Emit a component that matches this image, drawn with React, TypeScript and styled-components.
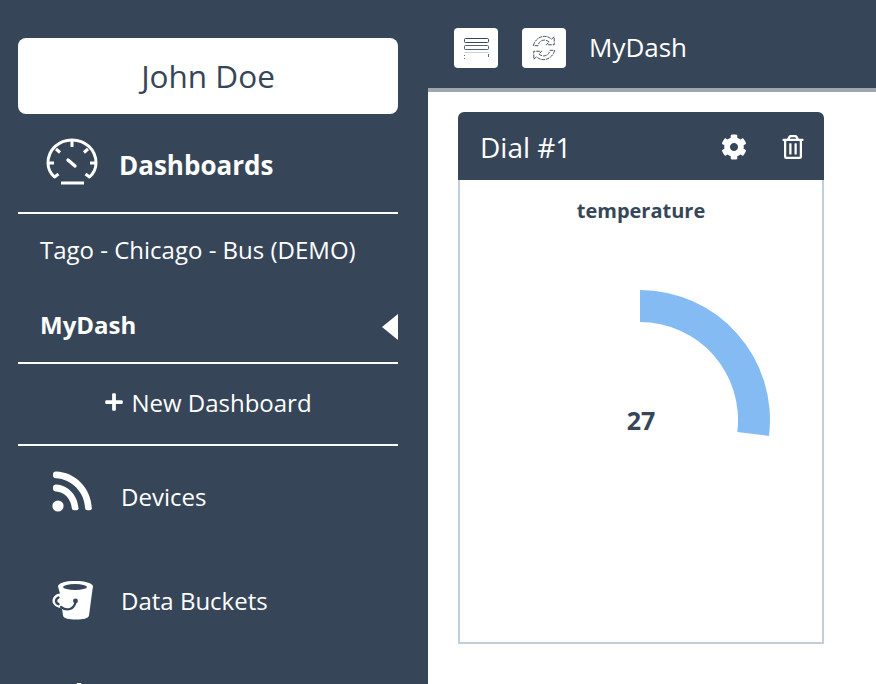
import styled, { createGlobalStyle } from 'styled-components';
import { FaCog, FaPlus, FaRegTrashAlt } from 'react-icons/fa';

const GlobalStyle = createGlobalStyle`
    html, body {
        margin: 0;
        padding: 0;
        height: 100%;
        overflow: hidden;
        background: #fff;
        font-family: 'Open Sans', 'Liberation Sans', sans-serif;
    }
`;

const GaugeIcon = () => (
    <svg width='54' height='50' viewBox='0 0 54 50' fill='none' stroke='#fff' strokeWidth='3' strokeLinecap='round'>
        <path d='M8.5 39C4 35 2 30 2 25 C2 11.5 13 2 26 2 C39 2 50 11.5 50 25 C50 30 48 35 43.5 39' />
        <path d='M26 3v6M10 11l4 3.5M42 11l-4 3.5M2.5 25h5.5M49.5 25h-5.5M8.5 39l4-3M43.5 39l-4-3' strokeLinecap='butt' />
        <path d='M22 22l7 6' strokeWidth='3.4' />
        <path d='M15 45h23' strokeLinecap='butt' />
    </svg>
);

const RssIcon = () => (
    <svg width='42' height='42' viewBox='1 0 42 42' fill='#fff'>
        <circle cx='7' cy='35' r='5.6' />
        <path d='M2 16.500a3 3 0 0 1 3-3C16.500 14 26.500 23.500 27.500 37a2 2 0 0 1-2 2.200h-2.200a2.400 2.400 0 0 1-2.500-2.300C20 28 13.500 21 5 20.500a3 3 0 0 1-3-3z' />
        <path d='M2 3.500a3 3 0 0 1 3-3C24 1 40 17 40.800 37a2 2 0 0 1-2 2.200h-2.400a2.300 2.300 0 0 1-2.300-2.300C33.300 21 20.500 8 5 7.300a3 3 0 0 1-3-3z' />
    </svg>
);

const BucketIcon = () => (
    <svg width='42' height='40' viewBox='0 0 42 40' fill='none'>
        <path
            fill='#fff'
            d='M23 1c9.500 0 18 2 18 5.500 0 1-.3 1.800-.5 2.700L37 35.500c-.5 3-6 4-13 4s-12.500-1-13-4l-1-7c-5-1-9.500-3.500-9.500-7.500 0-4 3-7 7.500-7.500L6 6.500C6 3 13.500 1 23 1z'
        />
        <ellipse cx='23' cy='7' rx='12' ry='3' fill='#364658' />
        <path d='M6.500 17.500c-1.500.8-2.500 2-2.500 3.500 0 1.500 1 2.500 2.500 3.200' stroke='#364658' strokeWidth='2.400' strokeLinecap='round' />
        <path d='M9 27c6 4.500 13 2.500 14.500-5' stroke='#364658' strokeWidth='2.200' strokeLinecap='round' />
        <circle cx='23.500' cy='21' r='2.400' fill='#364658' />
    </svg>
);

const CutOffIcon = () => (
    <svg width='42' height='42' viewBox='0 0 42 42' fill='#fff'>
        <path d='M25 0h4l5 14h-14z' />
    </svg>
);

const BarsIcon = () => (
    <svg width='27' height='24' viewBox='0 0 27 24' fill='none' stroke='#364658' strokeWidth='1'>
        <rect x='1.500' y='2.500' width='24' height='4' rx='1' />
        <rect x='1.500' y='9.500' width='24' height='4' rx='1' strokeOpacity='.85' />
        <path d='M1.500 16.500h24' strokeOpacity='.25' />
        <path d='M1.500 19v1M1.500 22v1M25.500 18v3' strokeOpacity='.8' />
    </svg>
);

const RefreshIcon = () => (
    <svg width='26' height='26' viewBox='0 0 28 28' fill='none' stroke='#364658' strokeWidth='1' strokeDasharray='4 1'>
        <path d='M2.500 11.500C4 5.500 9 1.500 14.500 1.500c3 0 5.500 1 7.500 3l3-2.500v8.500h-8.500l3-3c-1.500-1.300-3.300-2-5-2-3.500 0-6 2-7 6z' />
        <path d='M25.500 16.500C24 22.500 19 26.500 13.500 26.500c-3 0-5.500-1-7.500-3L3 26v-8.500h8.500l-3 3c1.500 1.300 3.300 2 5 2 3.500 0 6-2 7-6z' />
    </svg>
);

const App = () => {
    return (
        <Page>
            <GlobalStyle />
            <Sidebar>
                <UserBox>John Doe</UserBox>
                <SectionHead>
                    <IconSlot>
                        <GaugeIcon />
                    </IconSlot>
                    <SectionName>Dashboards</SectionName>
                </SectionHead>
                <DashLink>Tago - Chicago - Bus (DEMO)</DashLink>
                <DashLink $active>MyDash</DashLink>
                <NewDash>
                    <FaPlus size={20} />
                    New Dashboard
                </NewDash>
                <NavItem>
                    <NavIcon $lift={8}>
                        <RssIcon />
                    </NavIcon>
                    Devices
                </NavItem>
                <NavItem>
                    <NavIcon>
                        <BucketIcon />
                    </NavIcon>
                    Data Buckets
                </NavItem>
                <NavItem>
                    <NavIcon>
                        <CutOffIcon />
                    </NavIcon>
                </NavItem>
            </Sidebar>
            <Main>
                <TopBar>
                    <SquareButton>
                        <BarsIcon />
                    </SquareButton>
                    <SquareButton>
                        <RefreshIcon />
                    </SquareButton>
                    <PageTitle>MyDash</PageTitle>
                </TopBar>
                <Content>
                    <Card>
                        <CardHead>
                            <CardTitle>Dial #1</CardTitle>
                            <CardTools>
                                <FaCog size={26} />
                                <FaRegTrashAlt size={24} />
                            </CardTools>
                        </CardHead>
                        <CardBody>
                            <DialLabel>temperature</DialLabel>
                            <Dial>
                                <svg width='362' height='160' viewBox='0 0 362 160'>
                                    <path
                                        fill='#85bbf3'
                                        d='M180 0A130 130 0 0 1 309 146L277.300 142A98 98 0 0 0 180 32z'
                                    />
                                </svg>
                                <DialValue>27</DialValue>
                            </Dial>
                        </CardBody>
                    </Card>
                </Content>
            </Main>
        </Page>
    );
};

export default App;

const Page = styled.div`
    display: flex;
    height: 684px;
    width: 876px;
    overflow: hidden;
`;

const Sidebar = styled.aside`
    width: 428px;
    flex: none;
    box-sizing: border-box;
    height: 684px;
    overflow: hidden;
    padding: 38px 30px 0 18px;
    background: #364658;
    color: #fff;
`;

const UserBox = styled.div`
    height: 76px;
    border-radius: 8px;
    background: #fff;
    color: #364658;
    font-size: 31.5px;
    line-height: 76px;
    text-align: center;
`;

const SectionHead = styled.div`
    display: flex;
    align-items: center;
    height: 98px;
    padding-left: 28px;
    border-bottom: 2px solid #fff;
`;

const IconSlot = styled.div`
    display: flex;
    width: 73px;
    flex: none;
`;

const SectionName = styled.span`
    margin-top: 4px;
    font-size: 26px;
    font-weight: 700;
`;

const DashLink = styled.div<{ $active?: boolean }>`
    position: relative;
    height: ${p => (p.$active ? '73px' : '75px')};
    padding-left: 22px;
    font-size: 24px;
    font-weight: ${p => (p.$active ? 700 : 400)};
    line-height: 72px;
    ${p =>
        p.$active &&
        `
        border-bottom: 2px solid #fff;
        &::after {
            content: '';
            position: absolute;
            right: 0;
            top: 25px;
            border-style: solid;
            border-width: 13px 16px 13px 0;
            border-color: transparent #fff transparent transparent;
        }
    `}
`;

const NewDash = styled.div`
    display: flex;
    align-items: center;
    justify-content: center;
    gap: 7px;
    height: 82px;
    box-sizing: border-box;
    padding-bottom: 4px;
    border-bottom: 2px solid #fff;
    font-size: 24px;
`;

const NavItem = styled.div`
    display: flex;
    align-items: center;
    height: 104px;
    font-size: 24px;

    ${NewDash} + & {
        height: 100px;
        margin-bottom: 2px;
    }
`;

const NavIcon = styled.div<{ $lift?: number }>`
    display: flex;
    width: 103px;
    padding-left: 34px;
    box-sizing: border-box;
    flex: none;
    margin-bottom: ${p => p.$lift ?? 0}px;
`;

const Main = styled.main`
    flex: 1;
    min-width: 0;
`;

const TopBar = styled.header`
    display: flex;
    align-items: center;
    gap: 24px;
    height: 80px;
    padding: 8px 0 0 26px;
    background: #364658;
    border-bottom: 4px solid #9fa6ae;
`;

const SquareButton = styled.div`
    display: flex;
    align-items: center;
    justify-content: center;
    width: 44px;
    height: 40px;
    border-radius: 4px;
    background: #fff;
`;

const PageTitle = styled.div`
    margin: 0 0 2px -1px;
    color: #fff;
    font-size: 26px;
`;

const Content = styled.div`
    padding: 20px 0 0 30px;
`;

const Card = styled.section`
    width: 366px;
    height: 532px;
    display: flex;
    flex-direction: column;
`;

const CardHead = styled.div`
    display: flex;
    align-items: center;
    justify-content: space-between;
    flex: none;
    height: 68px;
    box-sizing: border-box;
    padding: 2px 19px 0 22px;
    border-radius: 6px 6px 0 0;
    background: #364658;
    color: #fff;
`;

const CardTitle = styled.div`
    font-size: 28px;
`;

const CardTools = styled.div`
    display: flex;
    align-items: center;
    gap: 34px;
`;

const CardBody = styled.div`
    flex: 1;
    border: 2px solid #c3cedb;
    border-top: none;
    color: #364658;
`;

const DialLabel = styled.div`
    margin-top: 18px;
    font-size: 20px;
    line-height: 26px;
    font-weight: 700;
    text-align: center;
`;

const Dial = styled.div`
    position: relative;
    margin-top: 66px;
    height: 160px;
`;

const DialValue = styled.div`
    position: absolute;
    left: 0;
    right: 0;
    top: 113px;
    font-size: 25px;
    line-height: 34px;
    font-weight: 700;
    text-align: center;
`;
